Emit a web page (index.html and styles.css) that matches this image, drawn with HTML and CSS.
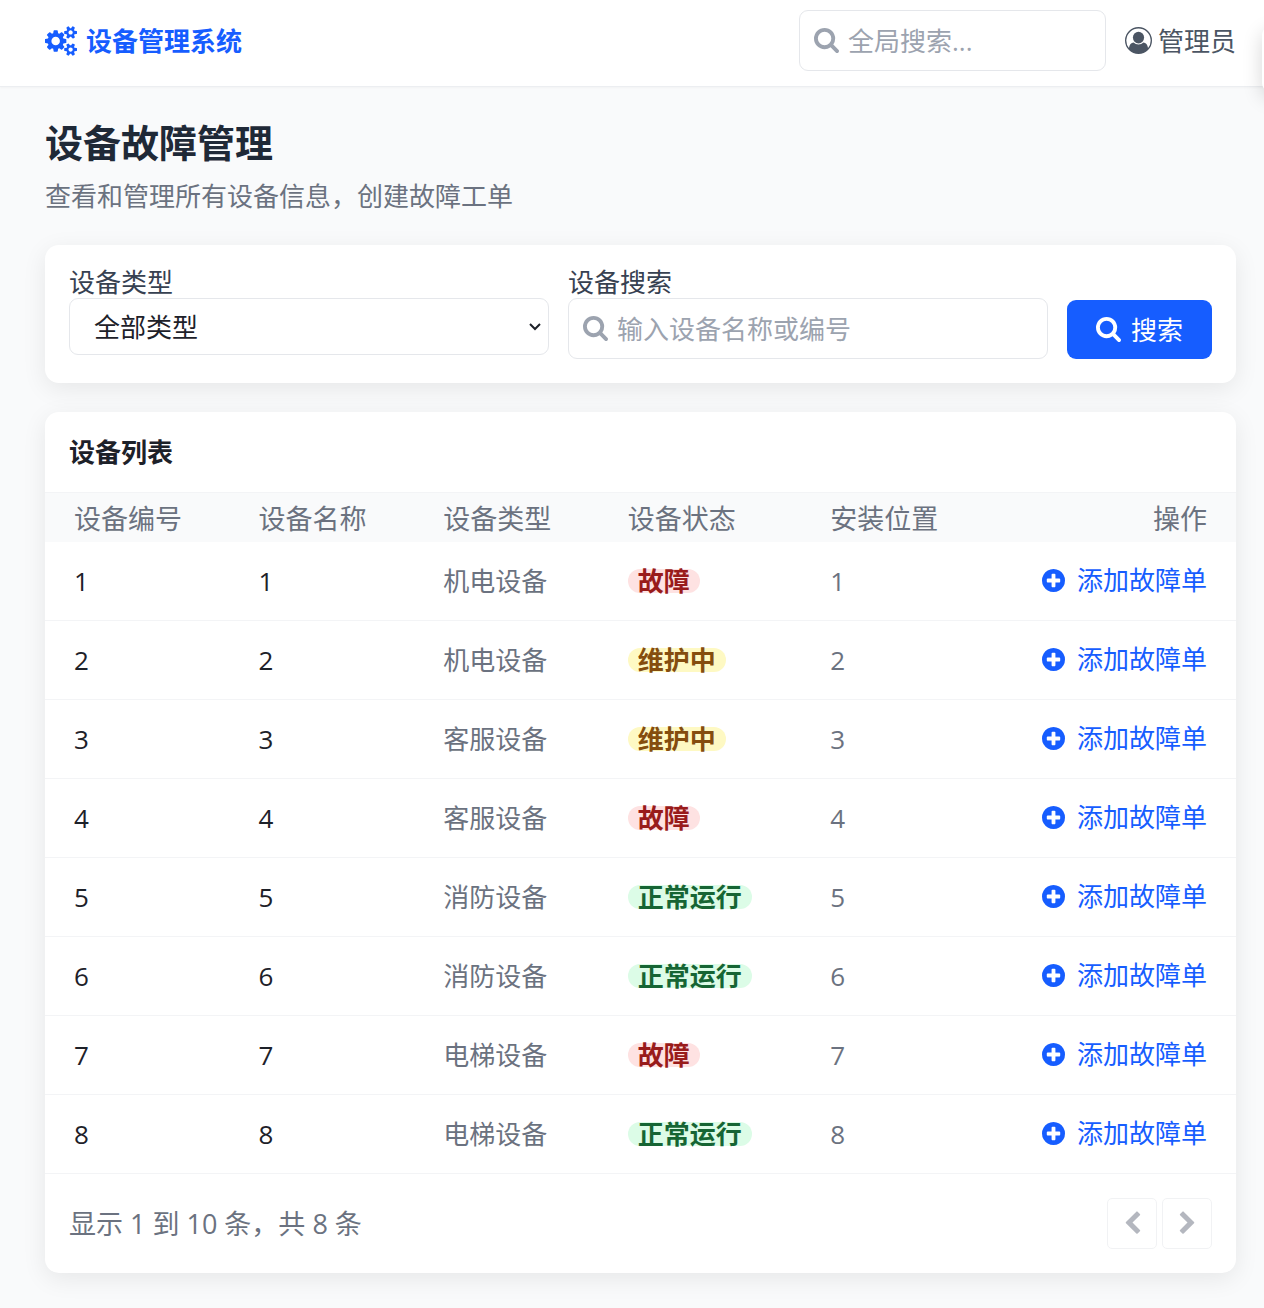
FILE: index.html
```html
<!DOCTYPE html>
<html lang="zh-CN">
<head>
    <meta charset="UTF-8">
    <meta name="viewport" content="width=device-width, initial-scale=1.0">
    <title>设备管理系统</title>
    <link rel="stylesheet" href="styles.css">
</head>
<body>
    <!-- 图标 -->
    <svg class="sprite" aria-hidden="true">
        <symbol id="icon-cogs" viewBox="-64 0 1920 1792">
            <path d="M832 896q0-106-75-181t-181-75-181 75-75 181 75 181 181 75 181-75 75-181zm768 512q0-52-38-90t-90-38-90 38-38 90q0 53 37.5 90.5t90.5 37.5 90.5-37.5 37.5-90.5zm0-1024q0-52-38-90t-90-38-90 38-38 90q0 53 37.5 90.5t90.5 37.5 90.5-37.5 37.5-90.5zm-384 421v185q0 10-7 19.5t-16 10.5l-155 24q-11 35-32 76 34 48 90 115 7 11 7 20 0 12-7 19-23 30-82.5 89.5t-78.5 59.5q-11 0-21-7l-115-90q-37 19-77 31-11 108-23 155-7 24-30 24h-186q-11 0-20-7.5t-10-17.5l-23-153q-34-10-75-31l-118 89q-7 7-20 7-11 0-21-8-144-133-144-160 0-9 7-19 10-14 41-53t47-61q-23-44-35-82l-152-24q-10-1-17-9.5t-7-19.5v-185q0-10 7-19.5t16-10.5l155-24q11-35 32-76-34-48-90-115-7-11-7-20 0-12 7-20 22-30 82-89t79-59q11 0 21 7l115 90q34-18 77-32 11-108 23-154 7-24 30-24h186q11 0 20 7.5t10 17.5l23 153q34 10 75 31l118-89q8-7 20-7 11 0 21 8 144 133 144 160 0 8-7 19-12 16-42 54t-45 60q23 48 34 82l152 23q10 2 17 10.5t7 19.5zm640 533v140q0 16-149 31-12 27-30 52 51 113 51 138 0 4-4 7-122 71-124 71-8 0-46-47t-52-68q-20 2-30 2t-30-2q-14 21-52 68t-46 47q-2 0-124-71-4-3-4-7 0-25 51-138-18-25-30-52-149-15-149-31v-140q0-16 149-31 13-29 30-52-51-113-51-138 0-4 4-7 4-2 35-20t59-34 30-16q8 0 46 46.5t52 67.5q20-2 30-2t30 2q51-71 92-112l6-2q4 0 124 70 4 3 4 7 0 25-51 138 17 23 30 52 149 15 149 31zm0-1024v140q0 16-149 31-12 27-30 52 51 113 51 138 0 4-4 7-122 71-124 71-8 0-46-47t-52-68q-20 2-30 2t-30-2q-14 21-52 68t-46 47q-2 0-124-71-4-3-4-7 0-25 51-138-18-25-30-52-149-15-149-31v-140q0-16 149-31 13-29 30-52-51-113-51-138 0-4 4-7 4-2 35-20t59-34 30-16q8 0 46 46.5t52 67.5q20-2 30-2t30 2q51-71 92-112l6-2q4 0 124 70 4 3 4 7 0 25-51 138 17 23 30 52 149 15 149 31z"/>
        </symbol>
        <symbol id="icon-search" viewBox="64 128 1664 1664">
            <path d="M1216 832q0-185-131.5-316.5t-316.5-131.5-316.5 131.5-131.5 316.5 131.5 316.5 316.5 131.5 316.5-131.5 131.5-316.5zm512 832q0 52-38 90t-90 38q-54 0-90-38l-343-342q-179 124-399 124-143 0-273.5-55.5t-225-150-150-225-55.5-273.5 55.5-273.5 150-225 225-150 273.5-55.5 273.5 55.5 225 150 150 225 55.5 273.5q0 220-124 399l343 343q37 37 37 90z"/>
        </symbol>
        <symbol id="icon-user" viewBox="0 0 28 28">
            <path fill-rule="evenodd" d="M14 0a14 14 0 1 1 0 28a14 14 0 1 1 0-28zM23.9 21.9A12.6 12.6 0 1 0 4.1 21.9C4.7 18.6 6.2 16.2 9 16.2C10.2 17.4 12 18.2 14 18.2S17.8 17.4 19 16.2C21.8 16.2 23.3 18.6 23.9 21.9z"/>
            <ellipse cx="14" cy="11" rx="5.8" ry="6"/>
        </symbol>
        <symbol id="icon-plus" viewBox="128 128 1536 1536">
            <path d="M1344 960v-128q0-26-19-45t-45-19h-256v-256q0-26-19-45t-45-19h-128q-26 0-45 19t-19 45v256h-256q-26 0-45 19t-19 45v128q0 26 19 45t45 19h256v256q0 26 19 45t45 19h128q26 0 45-19t19-45v-256h256q26 0 45-19t19-45zm320-64q0 209-103 385.5t-279.5 279.5-385.5 103-385.5-103-279.5-279.5-103-385.5 103-385.5 279.5-279.5 385.5-103 385.5 103 279.5 279.5 103 385.5z"/>
        </symbol>
        <symbol id="icon-left" viewBox="0 0 1792 1792">
            <path d="M1427 301l-531 531 531 531q19 19 19 45t-19 45l-166 166q-19 19-45 19t-45-19l-742-742q-19-19-19-45t19-45l742-742q19-19 45-19t45 19l166 166q19 19 19 45t-19 45z"/>
        </symbol>
        <symbol id="icon-right" viewBox="0 0 1792 1792">
            <path d="M1363 877l-742 742q-19 19-45 19t-45-19l-166-166q-19-19-19-45t19-45l531-531-531-531q-19-19-19-45t19-45l166-166q19-19 45-19t45 19l742 742q19 19 19 45t-19 45z"/>
        </symbol>
    </svg>

    <header class="navbar">
        <div class="brand">
            <svg class="icon-cogs"><use href="#icon-cogs"/></svg>
            <span>设备管理系统</span>
        </div>
        <div class="navbar-right">
            <div class="search-box">
                <svg class="icon"><use href="#icon-search"/></svg>
                <input type="text" placeholder="全局搜索..." aria-label="全局搜索">
            </div>
            <button type="button" class="user">
                <svg class="icon-user"><use href="#icon-user"/></svg>
                <span>管理员</span>
            </button>
        </div>
    </header>

    <!-- 提示框，默认收在屏幕右侧 -->
    <div class="toast-area"><div class="toast"></div></div>

    <main class="page">
        <h1>设备故障管理</h1>
        <p class="subtitle">查看和管理所有设备信息，创建故障工单</p>

        <form class="card filter">
            <div class="field">
                <label for="deviceType">设备类型</label>
                <div class="select-box">
                    <select id="deviceType">
                        <option value="" selected>全部类型</option>
                        <option value="1">机电设备</option>
                        <option value="2">客服设备</option>
                        <option value="3">消防设备</option>
                        <option value="4">电梯设备</option>
                    </select>
                    <svg class="arrow" viewBox="0 0 14 10"><path d="M2 2l5 5 5-5"/></svg>
                </div>
            </div>
            <div class="field">
                <label for="deviceSearch">设备搜索</label>
                <div class="search-box">
                    <svg class="icon"><use href="#icon-search"/></svg>
                    <input type="text" id="deviceSearch" placeholder="输入设备名称或编号">
                </div>
            </div>
            <button type="button" class="btn-search">
                <svg class="icon"><use href="#icon-search"/></svg>
                <span>搜索</span>
            </button>
        </form>

        <section class="card">
            <h2>设备列表</h2>
            <table>
                <thead>
                    <tr>
                        <th class="col-id">设备编号</th>
                        <th class="col-name">设备名称</th>
                        <th class="col-type">设备类型</th>
                        <th class="col-status">设备状态</th>
                        <th class="col-place">安装位置</th>
                        <th class="col-action">操作</th>
                    </tr>
                </thead>
                <tbody>
                    <tr>
                        <td class="dark">1</td>
                        <td class="dark">1</td>
                        <td>机电设备</td>
                        <td><span class="badge fault">故障</span></td>
                        <td>1</td>
                        <td class="col-action"><button type="button" class="btn-add"><svg class="icon-plus"><use href="#icon-plus"/></svg>添加故障单</button></td>
                    </tr>
                    <tr>
                        <td class="dark">2</td>
                        <td class="dark">2</td>
                        <td>机电设备</td>
                        <td><span class="badge repair">维护中</span></td>
                        <td>2</td>
                        <td class="col-action"><button type="button" class="btn-add"><svg class="icon-plus"><use href="#icon-plus"/></svg>添加故障单</button></td>
                    </tr>
                    <tr>
                        <td class="dark">3</td>
                        <td class="dark">3</td>
                        <td>客服设备</td>
                        <td><span class="badge repair">维护中</span></td>
                        <td>3</td>
                        <td class="col-action"><button type="button" class="btn-add"><svg class="icon-plus"><use href="#icon-plus"/></svg>添加故障单</button></td>
                    </tr>
                    <tr>
                        <td class="dark">4</td>
                        <td class="dark">4</td>
                        <td>客服设备</td>
                        <td><span class="badge fault">故障</span></td>
                        <td>4</td>
                        <td class="col-action"><button type="button" class="btn-add"><svg class="icon-plus"><use href="#icon-plus"/></svg>添加故障单</button></td>
                    </tr>
                    <tr>
                        <td class="dark">5</td>
                        <td class="dark">5</td>
                        <td>消防设备</td>
                        <td><span class="badge normal">正常运行</span></td>
                        <td>5</td>
                        <td class="col-action"><button type="button" class="btn-add"><svg class="icon-plus"><use href="#icon-plus"/></svg>添加故障单</button></td>
                    </tr>
                    <tr>
                        <td class="dark">6</td>
                        <td class="dark">6</td>
                        <td>消防设备</td>
                        <td><span class="badge normal">正常运行</span></td>
                        <td>6</td>
                        <td class="col-action"><button type="button" class="btn-add"><svg class="icon-plus"><use href="#icon-plus"/></svg>添加故障单</button></td>
                    </tr>
                    <tr>
                        <td class="dark">7</td>
                        <td class="dark">7</td>
                        <td>电梯设备</td>
                        <td><span class="badge fault">故障</span></td>
                        <td>7</td>
                        <td class="col-action"><button type="button" class="btn-add"><svg class="icon-plus"><use href="#icon-plus"/></svg>添加故障单</button></td>
                    </tr>
                    <tr>
                        <td class="dark">8</td>
                        <td class="dark">8</td>
                        <td>电梯设备</td>
                        <td><span class="badge normal">正常运行</span></td>
                        <td>8</td>
                        <td class="col-action"><button type="button" class="btn-add"><svg class="icon-plus"><use href="#icon-plus"/></svg>添加故障单</button></td>
                    </tr>
                </tbody>
            </table>
            <div class="pagination">
                <span>显示 1 到 10 条，共 8 条</span>
                <div class="pages">
                    <button type="button" aria-label="上一页" disabled><svg class="icon"><use href="#icon-left"/></svg></button>
                    <button type="button" aria-label="下一页" disabled><svg class="icon"><use href="#icon-right"/></svg></button>
                </div>
            </div>
        </section>
    </main>
</body>
</html>
```
FILE: styles.css
```css
* {
    box-sizing: border-box;
}

body {
    margin: 0;
    background-color: #f9fafb;
    color: #1d2129;
    font-family: "Open Sans", "Noto Sans CJK SC", sans-serif;
    font-size: 26px;
    line-height: 30px;
}

button, input, select {
    font: inherit;
    color: inherit;
}

button {
    border: none;
    background: none;
    padding: 0;
    cursor: pointer;
}

svg {
    fill: currentColor;
    flex-shrink: 0;
}

.sprite {
    display: none;
}

.icon {
    width: 25px;
    height: 25px;
}

/* 顶部导航 */
.navbar {
    display: flex;
    justify-content: space-between;
    align-items: flex-start;
    padding: 10px 28px 15px 45px;
    background-color: #ffffff;
    border-bottom: 1px solid #eceef1;
    box-shadow: 0 1px 2px rgba(0, 0, 0, 0.03);
}

.brand {
    display: flex;
    align-items: center;
    gap: 9px;
    height: 61px;
    color: #165dff;
    font-weight: 700;
}

.icon-cogs {
    width: 32px;
    height: 30px;
}

.navbar-right {
    display: flex;
    align-items: center;
    gap: 19px;
}

.user {
    display: flex;
    align-items: center;
    gap: 6px;
    color: #4b5563;
}

.icon-user {
    width: 27px;
    height: 27px;
}

.search-box {
    display: flex;
    align-items: center;
    gap: 9px;
    height: 61px;
    padding: 0 14px;
    border: 1px solid #e5e7eb;
    border-radius: 9px;
    background-color: #ffffff;
    color: #9ca3af;
}

.search-box input {
    flex: 1;
    min-width: 0;
    height: 100%;
    padding: 0;
    border: none;
    outline: none;
    background: none;
    color: #1d2129;
}

.search-box input::placeholder {
    color: #9ca3af;
}

.navbar .search-box {
    width: 307px;
}

.toast-area {
    position: absolute;
    top: 0;
    right: 0;
    width: 40px;
    height: 130px;
    overflow: hidden;
    pointer-events: none;
}

.toast {
    width: 200px;
    height: 66px;
    margin: 26px 0 0 38px;
    border-radius: 9px;
    background-color: #ffffff;
    box-shadow: 0 6px 20px rgba(0, 0, 0, 0.16);
}

/* 页面内容 */
.page {
    padding: 32px 28px 35px 45px;
}

h1 {
    margin: 0;
    font-size: 38px;
    line-height: 46px;
    color: #1f2937;
}

.subtitle {
    margin: 16px 0 34px;
    color: #6b7280;
}

.card {
    background-color: #ffffff;
    border-radius: 14px;
    box-shadow: 0 6px 24px rgba(0, 0, 0, 0.08);
}

/* 筛选 */
.filter {
    display: flex;
    gap: 19px;
    padding: 22px 24px 24px;
    margin-bottom: 29px;
}

.field {
    flex: 1;
}

.field label {
    display: block;
    margin-bottom: 1px;
    color: #374151;
}

.select-box {
    position: relative;
}

.select-box select {
    display: block;
    width: 100%;
    height: 57px;
    padding: 0 24px;
    border: 1px solid #e5e7eb;
    border-radius: 9px;
    background-color: #ffffff;
    appearance: none;
}

.arrow {
    position: absolute;
    top: 24px;
    right: 7px;
    width: 14px;
    height: 10px;
    fill: none;
    stroke: #1d2129;
    stroke-width: 2;
    pointer-events: none;
}

.btn-search {
    display: flex;
    align-items: center;
    align-self: flex-end;
    gap: 10px;
    height: 59px;
    padding: 0 29px;
    border-radius: 9px;
    background-color: #165dff;
    color: #ffffff;
}

.btn-search:hover {
    background-color: #0e4fe0;
}

/* 设备列表 */
h2 {
    margin: 0;
    padding: 25px 24px;
    font-size: 26px;
    line-height: 30px;
}

table {
    width: 100%;
    table-layout: fixed;
    border-collapse: collapse;
    color: #6b7280;
}

th, td {
    padding: 0 29px;
    text-align: left;
    white-space: nowrap;
}

th {
    height: 49px;
    padding-top: 3px;
    border-top: 1px solid #f3f4f6;
    background-color: #f9fafb;
    font-size: 27px;
    font-weight: 400;
}

td {
    height: 79px;
    border-bottom: 1px solid #f3f4f6;
}

.col-id, .col-name, .col-type {
    width: 15.5%;
}

.col-status {
    width: 17%;
}

.col-place {
    width: 15%;
}

.col-action {
    text-align: right;
}

.dark {
    color: #1d2129;
}

.badge {
    display: inline-block;
    padding: 0 10px;
    border-radius: 12px;
    font-weight: 700;
    line-height: 24px;
}

.fault {
    background-color: #fee2e2;
    color: #991b1b;
}

.repair {
    background-color: #fef9c3;
    color: #854d0e;
}

.normal {
    background-color: #dcfce7;
    color: #166534;
}

.btn-add {
    display: inline-flex;
    align-items: center;
    gap: 12px;
    color: #165dff;
}

.icon-plus {
    width: 23px;
    height: 23px;
}

/* 分页 */
.pagination {
    display: flex;
    justify-content: space-between;
    align-items: center;
    padding: 24px;
    color: #6b7280;
    font-size: 27px;
}

.pages {
    display: flex;
    gap: 5px;
}

.pages button {
    display: flex;
    align-items: center;
    justify-content: center;
    width: 50px;
    height: 51px;
    border: 1px solid #e5e7eb;
    border-radius: 5px;
    opacity: 0.5;
}
```
